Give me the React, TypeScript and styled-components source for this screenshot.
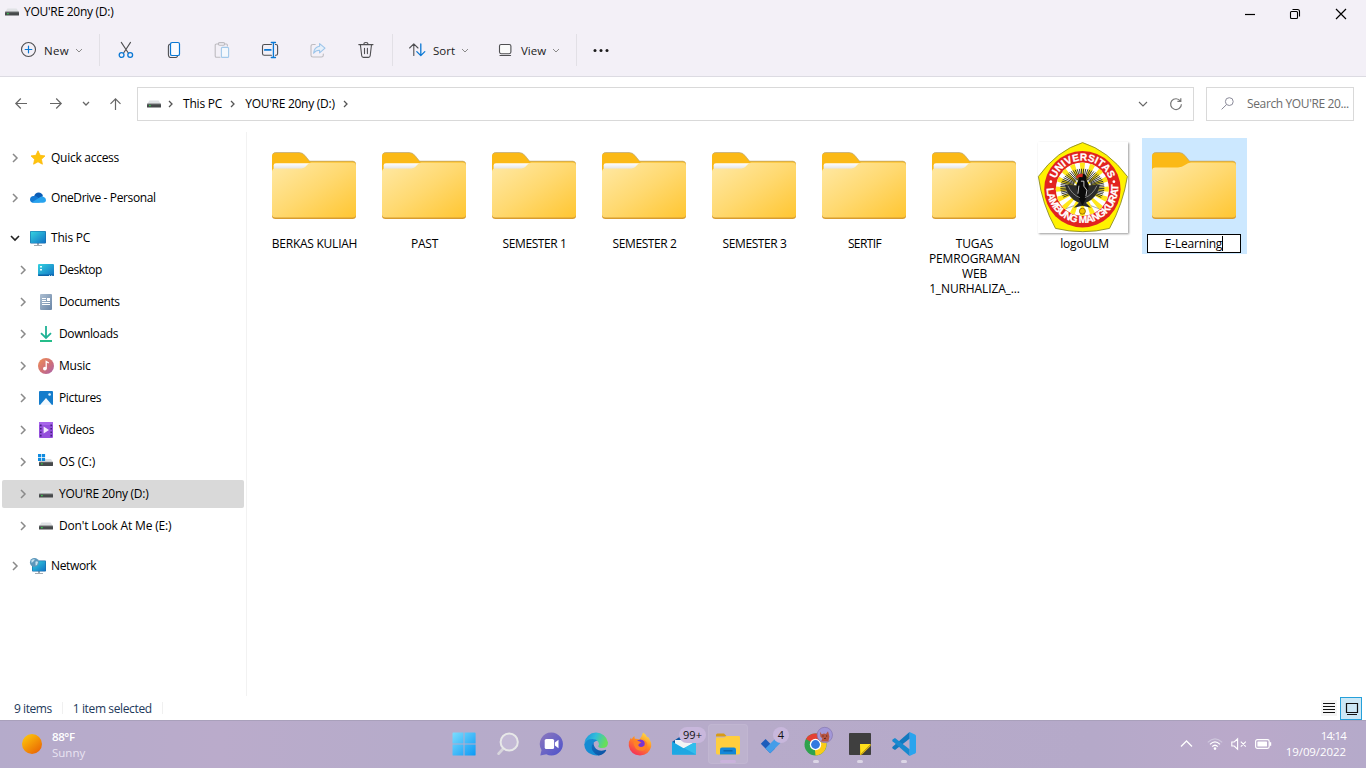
import React from 'react';
import styled, { createGlobalStyle, css } from 'styled-components';

const GlobalStyle = createGlobalStyle`
  * { box-sizing: border-box; }
  html, body { margin: 0; padding: 0; overflow: hidden; }
  body { font-family: "Open Sans", "Noto Sans", sans-serif; font-size: 12px; color: #000; background: #fff; }
  svg { display: block; flex: none; overflow: visible; }
`;

const Desktop = styled.div`
  width: 1366px;
  height: 768px;
  display: flex;
  flex-direction: column;
  background: #fff;
`;

const Label = styled.span<{ $track?: number }>`
  white-space: nowrap;
  line-height: 16px;
  letter-spacing: ${p => p.$track ?? -0.27}px;
`;

/* ---------- title bar ---------- */

const TitleBar = styled.header`
  height: 28px;
  display: flex;
  align-items: flex-start;
  background: #f3f0f7;
  padding-left: 4px;
`;

const WindowTitle = styled.div`
  display: flex;
  align-items: center;
  gap: 4px;
  height: 24px;
  flex: 1;
`;

const CaptionButton = styled.div<{ $width: number }>`
  width: ${p => p.$width}px;
  height: 28px;
  display: flex;
  align-items: center;
  justify-content: center;
`;

/* ---------- command bar ---------- */

const CommandBar = styled.div`
  height: 49px;
  display: flex;
  align-items: flex-start;
  padding-left: 8px;
  background: #f3f0f7;
  border-bottom: 1px solid #dcdbe2;
`;

const Command = styled.div<{ $width: number; $pad: number }>`
  width: ${p => p.$width}px;
  padding-left: ${p => p.$pad}px;
  height: 44px;
  display: flex;
  align-items: center;
`;

const CommandText = styled(Label)`
  font-size: 11.5px;
  color: #1b1b1b;
  margin: 2px 7px 0 8px;
`;

const IconGroup = styled.div`
  display: flex;
  padding: 0 2px;
`;

const IconCommand = styled.div`
  width: 48px;
  height: 44px;
  display: flex;
  align-items: center;
  justify-content: center;
`;

const Divider = styled.div`
  width: 1px;
  height: 32px;
  margin-top: 6px;
  background: #e2e0e6;
`;

/* ---------- address row ---------- */

const AddressRow = styled.div`
  height: 55px;
  padding: 10px 12px 0 0;
  display: flex;
  align-items: flex-start;
`;

const NavButtons = styled.div`
  width: 137px;
  height: 34px;
  display: grid;
  grid-template-columns: 41px 30px 30px 29px;
  align-items: center;
  justify-items: center;
`;

const AddressBox = styled.div`
  width: 1057px;
  height: 34px;
  border: 1px solid #d9d9d9;
  display: flex;
  align-items: center;
`;

const SearchBox = styled.div`
  width: 148px;
  height: 34px;
  margin-left: 12px;
  padding-left: 14px;
  border: 1px solid #d9d9d9;
  display: flex;
  align-items: center;
`;

const Crumbs = styled.div`
  display: flex;
  align-items: center;
  flex: 1;
  gap: 9px;
  padding-left: 8px;
`;

const DriveCrumb = styled.div`
  margin-right: -2px;
`;

const Crumb = styled(Label)`
  margin-left: 2px;
`;

const BoxIcon = styled.div<{ $right: number }>`
  margin-right: ${p => p.$right}px;
`;

const SearchText = styled(Label)`
  color: #6b6b6b;
  margin-left: 13px;
`;

/* ---------- body ---------- */

const Body = styled.div`
  height: 565px;
  display: flex;
`;

const Sidebar = styled.nav`
  width: 247px;
  height: 564px;
  border-right: 1px solid #f2f2f2;
  padding: 12px 2px 0 2px;
  display: flex;
  flex-direction: column;
  gap: 4px;
`;

const TreeRow = styled.div<{ $nested?: boolean; $spaced?: boolean; $selected?: boolean }>`
  width: 242px;
  height: 28px;
  border-radius: 2px;
  display: flex;
  align-items: center;
  padding-left: ${p => (p.$nested ? 16 : 8)}px;
  margin-top: ${p => (p.$spaced ? 8 : 0)}px;
  ${p => p.$selected && css`background: #d9d9d9;`}
`;

const Twist = styled.div`
  width: 9px;
  margin-right: 11px;
  padding-top: 1px;
  display: flex;
  justify-content: center;
`;

const TreeIcon = styled.div`
  width: 16px;
  height: 16px;
  margin-right: 5px;
`;

const Files = styled.main`
  flex: 1;
  padding: 6px 0 0 15px;
  display: flex;
  align-items: flex-start;
  gap: 5px;
`;

const FileCell = styled.div<{ $selected?: boolean }>`
  width: 105px;
  height: ${p => (p.$selected ? '116px' : 'auto')};
  background: ${p => (p.$selected ? '#cce8ff' : 'transparent')};
  display: flex;
  flex-direction: column;
  align-items: center;
`;

const Thumb = styled.div`
  width: 105px;
  height: 96px;
  padding-right: 1px;
  display: flex;
  align-items: flex-start;
  justify-content: center;
`;

const FileName = styled.div<{ $track?: number }>`
  margin-top: 2px;
  line-height: 15px;
  text-align: center;
  white-space: pre-line;
  letter-spacing: ${p => p.$track ?? -0.2}px;
`;

const RenameBox = styled.div`
  width: 94px;
  height: 19px;
  margin-right: 1px;
  padding-top: 1px;
  border: 1px solid #000;
  background: #fff;
  display: flex;
  align-items: center;
  justify-content: center;
`;

const Caret = styled.span`
  width: 1px;
  height: 15px;
  background: #000;
`;

const Picture = styled.div`
  width: 90px;
  height: 91px;
  margin: 4px 3px 0 0;
  background: #fff;
  box-shadow: 1px 1px 2px rgba(0, 0, 0, 0.4);
`;

/* ---------- status bar ---------- */

const StatusBar = styled.footer`
  height: 24px;
  display: flex;
  align-items: center;
  padding-left: 14px;
  color: #1e395b;
`;

const StatusText = styled(Label)`
  margin-top: 2px;
`;

const StatusDivider = styled.div`
  width: 1px;
  height: 12px;
  margin: 0 10px;
  background: #f0f0f0;
`;

const ViewSwitch = styled.div`
  margin-left: auto;
  padding-right: 4px;
  display: flex;
  align-items: center;
  gap: 3px;
`;

const ViewMode = styled.div<{ $active?: boolean }>`
  width: ${p => (p.$active ? 22 : 16)}px;
  height: ${p => (p.$active ? 23 : 16)}px;
  padding: ${p => (p.$active ? '1px 0 0 2px' : '0')};
  background: ${p => (p.$active ? '#cce8f6' : '#f5f5f5')};
  border: ${p => (p.$active ? '1px solid #26a0da' : '0')};
  display: flex;
  align-items: center;
  justify-content: center;
`;

/* ---------- taskbar ---------- */

const Taskbar = styled.div`
  height: 48px;
  display: flex;
  border-top: 1px solid #a9a0bb;
  background: linear-gradient(90deg, #b5abcb 0%, #baabcb 16%, #b6abca 30%, #b7abca 55%, #b5a9c9 80%, #baa9ca 91%, #b5aaca 100%);
`;

const Weather = styled.div`
  width: 442px;
  padding: 0 0 1px 22px;
  display: flex;
  align-items: center;
  gap: 10px;
`;

const WeatherText = styled.div`
  display: flex;
  flex-direction: column;
  padding-top: 1px;
  font-size: 11.5px;
  color: #fff;
`;

const Temperature = styled(Label)`
  font-weight: 600;
`;

const WeatherNote = styled(Label)`
  color: #e9e4f2;
`;

const Apps = styled.div`
  display: flex;
  align-items: flex-start;
`;

const AppSlot = styled.div<{ $active?: boolean }>`
  position: relative;
  width: 44px;
  height: 46px;
  display: flex;
  align-items: center;
  justify-content: center;
  &::before {
    content: "";
    position: absolute;
    inset: 3px 2px;
    border-radius: 4px;
    background: ${p => (p.$active ? 'rgba(255,255,255,0.09)' : 'transparent')};
    border: ${p => (p.$active ? '1px solid rgba(255,255,255,0.06)' : '0')};
  }
  svg { position: relative; }
`;

const Running = styled.span<{ $wide?: boolean }>`
  position: absolute;
  bottom: 4px;
  left: 50%;
  width: ${p => (p.$wide ? 16 : 6)}px;
  margin-left: ${p => (p.$wide ? -8 : -3)}px;
  height: 3px;
  border-radius: 2px;
  background: ${p => (p.$wide ? '#cab3dc' : '#dcd6e6')};
`;

const Badge = styled.span<{ $width: number; $left: number }>`
  position: absolute;
  top: 6px;
  left: ${p => p.$left}px;
  width: ${p => p.$width}px;
  height: 16px;
  border-radius: 8px;
  background: #c8b7dc;
  color: #111;
  font-size: 11px;
  line-height: 16px;
  text-align: center;
`;

const Tray = styled.div`
  margin-left: auto;
  padding: 0 20px 1px 0;
  display: flex;
  align-items: center;
`;

const TrayIcons = styled.div`
  display: flex;
  align-items: center;
  gap: 8px;
  margin-right: 12px;
`;

const TrayChevron = styled.div`
  margin-right: 7px;
`;

const Clock = styled.div`
  width: 62px;
  display: flex;
  flex-direction: column;
  align-items: flex-end;
  color: #fff;
  font-size: 11.5px;
`;

/* ---------- icons ---------- */

const Drive = () => (
  <svg width="16" height="16" viewBox="0 0 16 16">
    <path d="M3.4 4.5h9.2l2.2 3.4H1.2z" fill="#e0e2e5" />
    <rect x="1" y="7.8" width="14" height="3.8" rx=".4" fill="#46494b" />
    <path d="M1.2 8.1h13.6" stroke="#7c7f81" strokeWidth=".7" />
    <path d="M3.2 9.6h1.4" stroke="#2fe04b" strokeWidth="1.2" />
  </svg>
);

type ChevronProps = { dir?: 'right' | 'down' | 'up'; w?: number; color?: string; stroke?: number };

const Chevron = ({ dir = 'right', w = 4, color = '#8a8a8a', stroke = 1.3 }: ChevronProps) =>
  dir === 'right' ? (
    <svg width={w} height={w * 2} viewBox={`0 0 ${w} ${w * 2}`} fill="none" stroke={color} strokeWidth={stroke}>
      <path d={`M0 0L${w} ${w}L0 ${w * 2}`} />
    </svg>
  ) : (
    <svg width={w * 2} height={w} viewBox={`0 0 ${w * 2} ${w}`} fill="none" stroke={color} strokeWidth={stroke}>
      <path d={dir === 'down' ? `M0 0L${w} ${w}L${w * 2} 0` : `M0 ${w}L${w} 0L${w * 2} ${w}`} />
    </svg>
  );

const Line = ({ children }: { children: React.ReactNode }) => (
  <svg width="16" height="16" viewBox="0 0 16 16" fill="none" stroke="#4f4f52" strokeWidth="1.1" strokeLinecap="round" strokeLinejoin="round">
    {children}
  </svg>
);

const BLUE = '#0a78d4';

const NewIcon = () => (
  <Line><circle cx="8.5" cy="7.5" r="7" /><path d="M8.5 4.2v6.6M5.2 7.5h6.6" stroke={BLUE} strokeWidth="1.2" /></Line>
);
const CutIcon = () => (
  <Line>
    <path d="M3.3 .4L10.3 11M12.5 .4L5.6 11" />
    <circle cx="3.6" cy="13" r="2.4" stroke={BLUE} strokeWidth="1.3" />
    <circle cx="12.2" cy="13" r="2.4" stroke={BLUE} strokeWidth="1.3" />
  </Line>
);
const CopyIcon = () => (
  <Line>
    <path d="M3.6 2.2Q2.4 2.8 2.4 4.4V12.4Q2.4 15.5 5.4 15.5H9.4Q10.8 15.5 11.4 14.4" />
    <rect x="4.5" y=".5" width="9" height="13" rx="1.6" fill="#f9fbff" stroke={BLUE} strokeWidth="1.2" />
  </Line>
);
const PasteIcon = () => (
  <Line>
    <path d="M4.5 2H2.4Q1.2 2 1.2 3.2V14Q1.2 15.3 2.4 15.3H6M10.5 2H12.4Q13.4 2 13.4 3.2V4" stroke="#bdbbc0" />
    <rect x="4.4" y=".6" width="6.2" height="2.6" rx="1.2" stroke="#bdbbc0" />
    <rect x="7.4" y="5.4" width="7.2" height="10" rx="1" fill="#f4f8fd" stroke="#a3c9ea" />
  </Line>
);
const RenameIcon = () => (
  <Line>
    <path d="M9.4 2.5H2.3Q.5 2.5 .5 4.3V11.4Q.5 13.2 2.3 13.2H9.4M13.4 2.5H14Q15.6 2.5 15.6 4.3V11.4Q15.6 13.2 14 13.2H13.4" />
    <path d="M2.8 7.9h6" stroke={BLUE} strokeWidth="1.7" />
    <path d="M11.4 .5v15M9.3 .5h4.2M9.3 15.5h4.2" stroke={BLUE} strokeWidth="1.3" />
  </Line>
);
const ShareIcon = () => (
  <Line>
    <path d="M5.2 2.5H3Q1 2.5 1 4.4V13.2Q1 15 3 15H11.4Q13.3 15 13.3 13.2V12" stroke="#bdbbc0" />
    <path d="M9.6 1.6L15 6.2L9.6 10.8V8.2Q5.8 8 3.6 11.2Q4.2 5 9.6 4.3Z" fill="#e7f0fa" stroke="#9cc5ea" />
  </Line>
);
const TrashIcon = () => (
  <Line>
    <path d="M.8 2.6H15M2.4 2.8L3.7 13.8Q3.9 15.4 5.4 15.4H10.5Q12 15.4 12.2 13.8L13.5 2.8M5.8 2.4Q5.8 .5 7.9 .5T10 2.4M6.5 6.2V11.6M9.4 6.2V11.6" />
  </Line>
);
const SortIcon = () => (
  <Line>
    <path d="M4.8 13.4V2M.6 6L4.8 1.8L9 6" />
    <path d="M11.8 2V13.4M7.8 9.6L11.8 13.6L15.8 9.6" stroke={BLUE} strokeWidth="1.3" />
  </Line>
);
const ViewIcon = () => (
  <Line>
    <rect x="2.5" y="2.5" width="11.4" height="9.2" rx="1.6" fill="#fafafa" />
    <path d="M3 13.5h10.6" />
  </Line>
);

const Stroke = ({ w, h, d, color = '#666' }: { w: number; h: number; d: string; color?: string }) => (
  <svg width={w} height={h} viewBox={`0 0 ${w} ${h}`} fill="none" stroke={color} strokeWidth="1.2">
    <path d={d} />
  </svg>
);

const treeIcons: Record<string, React.ReactNode> = {
  star: (
    <svg width="16" height="16" viewBox="0 0 16 16">
      <path d="M8 .8L10.1 5.3L15 5.9L11.4 9.3L12.4 14.2L8 11.8L3.6 14.2L4.6 9.3L1 5.9L5.9 5.3Z" fill="#fec40c" stroke="#fdb90b" strokeWidth=".8" strokeLinejoin="round" />
    </svg>
  ),
  cloud: (
    <svg width="16" height="16" viewBox="0 0 16 16">
      <path d="M4 6.5Q5.2 2.6 8.6 2.6Q12 2.6 13 6.2L8 9Z" fill="#0a5cb5" />
      <path d="M3.4 12.6Q0 12.4 0 9.4Q.2 6.2 3.6 6Q5.6 5.6 7.4 7L13 11L9 12.6Z" fill="#1479d3" />
      <path d="M2 12.3L9.6 7.4Q11.4 6 13.3 6.8Q16 7.6 16 10Q15.9 12.8 13 12.8H3.6Q2.6 12.8 2 12.3Z" fill="#27a3ee" />
    </svg>
  ),
  pc: (
    <svg width="16" height="16" viewBox="0 0 16 16">
      <defs><linearGradient id="scr" x1="0" y1="0" x2="1" y2="1"><stop offset="0" stopColor="#34d3e0" /><stop offset="1" stopColor="#1071c4" /></linearGradient></defs>
      <path d="M7 13h2v2h3v.9H4V15h3z" fill="#a3abb2" />
      <rect x="0" y="1" width="16" height="12.6" rx="1" fill="#1a6ba8" />
      <rect x=".6" y="1.6" width="14.8" height="11.4" rx=".5" fill="url(#scr)" />
    </svg>
  ),
  desktop: (
    <svg width="16" height="16" viewBox="0 0 16 16">
      <rect x="0" y="2" width="16" height="12" rx="1" fill="url(#scr)" />
      <path d="M0 12.6h16V13q0 1-1 1H1q-1 0-1-1z" fill="#0d63a8" />
      <path d="M2 4h2v1.6H2zM2 7h2v1.6H2zM11 13h1v.8h-1zM13.2 13h1v.8h-1z" fill="#e8fbff" />
    </svg>
  ),
  docs: (
    <svg width="16" height="16" viewBox="0 0 16 16">
      <defs><linearGradient id="doc" x1="0" y1="0" x2="1" y2="1"><stop offset="0" stopColor="#adbfd2" /><stop offset="1" stopColor="#6985a6" /></linearGradient></defs>
      <rect x="2" y="0" width="12" height="16" rx="1" fill="url(#doc)" />
      <path d="M4 4.5h4M4 6.5h4M4 8.5h8M4 10.5h8" stroke="#fff" strokeWidth="1" />
      <rect x="9" y="4" width="3" height="3" fill="#fff" />
    </svg>
  ),
  down: (
    <svg width="16" height="16" viewBox="0 0 16 16" fill="none" stroke="#1fb295" strokeWidth="1.8">
      <path d="M8 0V12M3 7.2L8 12L13 7.2" /><path d="M2 15h12" stroke="#25bd8a" strokeWidth="2" />
    </svg>
  ),
  music: (
    <svg width="16" height="16" viewBox="0 0 16 16">
      <defs><linearGradient id="mus" x1="0" y1="0" x2="1" y2="1"><stop offset="0" stopColor="#f09055" /><stop offset=".55" stopColor="#cf6f78" /><stop offset="1" stopColor="#a862ad" /></linearGradient></defs>
      <circle cx="8" cy="8" r="8" fill="url(#mus)" />
      <circle cx="6.9" cy="10.6" r="1.9" fill="#fff" /><path d="M8.2 10.6V3.4L10.8 5" fill="none" stroke="#fff" strokeWidth="1.3" />
    </svg>
  ),
  pictures: (
    <svg width="16" height="16" viewBox="0 0 16 16">
      <rect x="1" y="1" width="14" height="14" rx="1" fill="#147ccb" />
      <path d="M2 15L8 8L14 15Z" fill="#f3f9fe" /><circle cx="11.6" cy="4.5" r="1.3" fill="#d9efff" />
    </svg>
  ),
  videos: (
    <svg width="16" height="16" viewBox="0 0 16 16">
      <rect x="1" y="0" width="14" height="16" rx="1" fill="#9550dc" />
      <path d="M1 0h14v3H1z" fill="#a765ea" />
      <path d="M2.8 2.6v12M13.2 2.6v12" stroke="#41207c" strokeWidth="1.5" strokeDasharray="1.6 1.8" />
      <path d="M5.6 4.6L11 8L5.6 11.4Z" fill="#f5ecff" />
    </svg>
  ),
  os: (
    <svg width="16" height="16" viewBox="0 0 16 16">
      <path d="M5 5h8l1.9 3H1z" fill="#dcdfe2" />
      <rect x="1" y="7.9" width="14" height="4" rx=".4" fill="#46494b" /><path d="M1.2 8.2h13.6" stroke="#7c7f81" strokeWidth=".7" /><path d="M3.2 9.8h1.4" stroke="#2fe04b" strokeWidth="1.2" />
      <path d="M0 0h3.2v3.2H0zM3.9 0h3.2v3.2H3.9zM0 3.9h3.2v3.2H0zM3.9 3.9h3.2v3.2H3.9z" fill="#0f8be0" />
    </svg>
  ),
  drive: <Drive />,
  network: (
    <svg width="16" height="16" viewBox="0 0 16 16">
      <path d="M8 13h2v2h3v.9H5V15h3z" fill="#a3abb2" />
      <rect x="2" y="2.6" width="14" height="11" rx=".8" fill="#1a6ba8" /><rect x="2.6" y="3.2" width="12.8" height="9.8" fill="url(#scr)" />
      <circle cx="4.4" cy="4.4" r="4.5" fill="#5c97bb" /><path d="M1.3 2.4Q3 .6 5 1.4L3.4 3.6L1.6 5zM5.4 3.8Q7.4 2.4 8 4.2Q7.6 7 5.6 7.6Z" fill="#c4e0ee" />
    </svg>
  ),
};

const FRONT_FULL = 'M0 34Q0 30.6 3.4 30.6H27Q32 30.6 34.6 27.4Q36.6 24.4 39.4 24.4H80.5Q84 24.4 84 27.8V76.6Q84 79.6 80.5 79.6H3.5Q0 79.6 0 76.6Z';
const FRONT_EMPTY = 'M0 32.6Q0 29.4 3.4 29.4H26Q30 29.4 33 27Q36 24.4 39 24.4H80.5Q84 24.4 84 27.8V76.6Q84 79.6 80.5 79.6H3.5Q0 79.6 0 76.6Z';

const Folder = ({ filled }: { filled?: boolean }) => (
  <svg width="84" height="82" viewBox="0 0 84 82">
    <defs>
      <linearGradient id="front" x1="0" y1="0" x2="1" y2="1">
        <stop offset="0" stopColor="#ffe9a6" /><stop offset=".5" stopColor="#ffd970" /><stop offset="1" stopColor="#ffc632" />
      </linearGradient>
      <linearGradient id="sheet" x1="0" y1="0" x2="0" y2="1"><stop offset="0" stopColor="#fff" /><stop offset="1" stopColor="#dedede" /></linearGradient>
    </defs>
    <path d="M0 18Q0 14.5 3.5 14.5H27Q30.5 14.5 33 17.5L37.5 23H80.5Q84 23 84 27V50H0Z" fill="#fbb916" />
    <path d="M1 16Q2 14.5 3.5 14.5H27Q30.5 14.5 33 17.5L37.5 23.2H81Q83 23.4 83.6 25.5" fill="none" stroke="#b9a77c" strokeWidth=".9" opacity=".8" />
    {filled && <path d="M1.6 32V27.6Q1.6 25.2 4 25.2H38Q35 30 29 32Z" fill="url(#sheet)" />}
    <path d="M0 70H84V78Q84 81 80.5 81H3.5Q0 81 0 78Z" fill="#d79c30" />
    <path d={filled ? FRONT_FULL : FRONT_EMPTY} fill="url(#front)" />
  </svg>
);

const rays = Array.from({ length: 16 }, (_, i) => i * 22.5);
const spokes = Array.from({ length: 44 }, (_, i) => -210 + i * 5.6);

const UniversityLogo = () => (
  <svg width="90" height="91" viewBox="0 0 90 91">
    <defs>
      <path id="arcTop" d="M15.8 45.5A28.7 28.7 0 0 1 73.2 45.5" />
      <path id="arcBottom" d="M8.7 43.5A35.8 35.8 0 1 0 80.3 43.5" />
    </defs>
    <path d="M44.6 .6Q70 8.5 89.4 34.5Q85 62 71.5 86.4Q45 93 17.5 86.4Q4 62 .4 34.5Q19 8.5 44.6 .6Z" fill="#fff200" stroke="#8c8a28" strokeWidth=".9" />
    <g transform="translate(-.1 1.7)">
      <circle cx="44.5" cy="45.5" r="38.2" fill="#e2231f" />
      <circle cx="44.5" cy="45.5" r="26.6" fill="#fff" />
      {rays.map(a => (
        <path key={a} d="M44.5 45.5L41.9 19.2Q44.5 18.4 47.1 19.2Z" fill="#ffe719" transform={`rotate(${a} 44.5 45.5)`} />
      ))}
      {spokes.map(a => {
        const r = (a * Math.PI) / 180;
        return <line key={a} x1={44.5 + 9 * Math.cos(r)} y1={44 + 9 * Math.sin(r)} x2={44.5 + 22 * Math.cos(r)} y2={44 + 19 * Math.sin(r)} stroke="#252525" strokeWidth=".9" />;
      })}
      <path d="M44.5 42L27 41Q30 55 41 59L36 64L44.5 62L53 64L48 59Q59 55 62 41Z" fill="#2b2b2b" />
      <path d="M40.5 36Q40.5 30 45 30Q49 30.5 48.6 36L51 41L49 53L44.5 62L40 53L38.5 41Z" fill="#0b0b0b" />
      <path d="M45 30Q38 29.4 38.4 35Q41 32.6 44.6 33.6Z" fill="#d82a1e" />
      <path d="M43 37.5h3v5l3 4-1 6M41 42l-1 8" fill="none" stroke="#eee" strokeWidth=".8" />
      <path d="M30 42Q34 51 42 54M59 42Q55 51 47 54M36 62L28 65M53 62L61 65" fill="none" stroke="#999" strokeWidth=".8" />
      <circle cx="44.5" cy="67.5" r="3" fill="#f4c300" stroke="#8c6800" strokeWidth=".9" />
      <circle cx="12.9" cy="38" r="1.4" fill="#fff" /><circle cx="76" cy="38" r="1.4" fill="#fff" />
      <g fill="#fff" stroke="#fff" strokeWidth=".25" fontFamily="Liberation Sans, sans-serif" fontWeight="700" fontSize="10.2">
        <text><textPath href="#arcTop" startOffset="10.5" textLength="69">UNIVERSITAS</textPath></text>
        <text><textPath href="#arcBottom" startOffset="1" textLength="114">LAMBUNG MANGKURAT</textPath></text>
      </g>
    </g>
  </svg>
);

const appIcons = {
  start: (
    <svg width="24" height="24" viewBox="0 0 24 24">
      <defs><linearGradient id="win" x1="0" y1="0" x2="1" y2="1"><stop offset="0" stopColor="#7bdcfd" /><stop offset="1" stopColor="#0b99f5" /></linearGradient></defs>
      <path d="M.5 1.5Q.5 .6 1.4 .6H11.5V11.6H.5zM12.5.6H22.6q1 0 1 .9V11.6H12.5zM.5 12.6h11v11H1.4q-.9 0-.9-.9zM12.5 12.6H23.6v10.1q0 .9-1 .9H12.5z" fill="url(#win)" />
    </svg>
  ),
  search: (
    <svg width="24" height="24" viewBox="0 0 24 24" fill="none">
      <path d="M2.6 21.6L7.6 16.2" stroke="#d7d5dc" strokeWidth="2.8" strokeLinecap="round" />
      <circle cx="13.2" cy="10" r="8.6" fill="#c4bad6" stroke="#e7e8e8" strokeWidth="2" />
    </svg>
  ),
  chat: (
    <svg width="24" height="24" viewBox="0 0 24 24">
      <defs><linearGradient id="chat" x1="0" y1="0" x2="1" y2="1"><stop offset="0" stopColor="#8d79bd" /><stop offset="1" stopColor="#4c51cc" /></linearGradient></defs>
      <path d="M11.5 .5A11.5 11.5 0 1 1 6.3 22.3L.3 23.4L1.5 18A11.5 11.5 0 0 1 11.5 .5Z" fill="url(#chat)" />
      <rect x="4.7" y="7" width="9.4" height="10" rx="1.6" fill="#fff" /><path d="M14.9 10.4L18.5 7.8V16.2L14.9 13.6Z" fill="#fff" />
    </svg>
  ),
  edge: (
    <svg width="24" height="24" viewBox="0 0 24 24">
      <defs>
        <linearGradient id="edgeTop" x1="0" y1="0" x2="1" y2=".3"><stop offset="0" stopColor="#1b8fd8" /><stop offset=".5" stopColor="#31bddc" /><stop offset="1" stopColor="#67de5a" /></linearGradient>
        <linearGradient id="edgeLow" x1="0" y1="0" x2="1" y2="1"><stop offset="0" stopColor="#1270c0" /><stop offset="1" stopColor="#0c4ea0" /></linearGradient>
      </defs>
      <path d="M.3 11A12 12 0 0 1 24 10.4Q24 16 18 16Q14.4 16 14.2 14.2Q15.6 12.4 14.6 10.4Q13 7.4 8.8 7.4Q3.4 7.4 .3 11Z" fill="url(#edgeTop)" />
      <path d="M.2 12.2Q2 7 8.6 7Q11.6 7 13.4 8.6Q9 9.6 8.6 13.6Q8.6 19 14.6 20.6Q18.8 21 21.6 18.8A12 12 0 0 1 .2 12.2Z" fill="#158bd3" />
      <path d="M9.6 10.6Q6.4 14.6 8.6 18.8Q11 22.6 14.6 23.6Q19.4 22.6 22.2 18.4Q22 17.6 21 18Q16 20 12.2 17Q9.4 14.6 9.6 10.6Z" fill="url(#edgeLow)" />
    </svg>
  ),
  firefox: (
    <svg width="24" height="24" viewBox="0 0 24 24">
      <defs><linearGradient id="fx" x1=".8" y1="0" x2=".2" y2="1"><stop offset="0" stopColor="#ffe44a" /><stop offset=".45" stopColor="#ff8a22" /><stop offset="1" stopColor="#f5275f" /></linearGradient></defs>
      <path d="M15 .4Q18 2 19 5Q21 5 21.6 7.4Q24 11 23.2 14.6Q21 23.4 12 23.5Q2.6 23 .8 14Q.2 9.6 3 5.6L3.6 7.4Q5 4.6 6.4 4L6.8 6.8Q9.4 6.4 11.4 7.6Q13.6 5 15 .4Z" fill="url(#fx)" />
      <circle cx="12.4" cy="13" r="5.4" fill="#7a35d2" />
      <path d="M5.4 10Q9.6 7.4 13.4 10.8Q10 11.6 10.4 13.8Q13 16.6 16.4 13.4Q17.6 9.6 14.4 7.2Q20 9 19.2 14.4Q17 19.4 11.6 18.8Q6 17.4 5.4 10Z" fill="#ff8126" />
    </svg>
  ),
  mail: (
    <svg width="24" height="24" viewBox="0 0 24 24">
      <path d="M0 10L12 2L24 10V14H0Z" fill="#0c59a4" /><path d="M3 8h18v9H3z" fill="#f2f4f5" />
      <path d="M0 9.6L12 16.4L24 9.6V22.4H0Z" fill="#1ba8e4" /><path d="M0 22.4L24 9.6V22.4Z" fill="#32bdec" /><path d="M0 22.4L12 16L24 22.4Z" fill="#1498dc" opacity=".6" />
    </svg>
  ),
  explorer: (
    <svg width="24" height="24" viewBox="0 0 24 24">
      <path d="M0 3Q0 1.4 1.5 1.4H8L11 4.4H0z" fill="#d89b14" /><path d="M0 5.4H8L10.6 4H22.6Q24 4 24 5.4V21Q24 22.4 22.6 22.4H1.4Q0 22.4 0 21Z" fill="#ffce3e" />
      <path d="M4 22.4V17.4Q4 15.4 6 15.4H18Q20 15.4 20 17.4V22.4Z" fill="#1387d8" /><path d="M7.5 18.8h9" stroke="#0b62a8" strokeWidth="1.4" />
    </svg>
  ),
  todo: (
    <svg width="24" height="24" viewBox="0 0 24 24">
      <path d="M.8 11.8L5.6 7L15 16.4L10.2 21.2Z" fill="#1e5dbb" /><path d="M5.4 16.4L16.6 5.2L21.4 10L10.2 21.2Z" fill="#459de8" />
    </svg>
  ),
  chrome: (
    <svg width="24" height="24" viewBox="0 0 24 24">
      <circle cx="11.5" cy="12.5" r="11" fill="#2ea24d" />
      <path d="M11.5 12.5L1.9 7A11 11 0 0 1 21 7Z" fill="#e44134" /><path d="M11.5 12.5L21 7A11 11 0 0 1 11.5 23.5L11 18Z" fill="#fbcc17" />
      <circle cx="11.5" cy="12.5" r="5.7" fill="#fff" /><circle cx="11.5" cy="12.5" r="4.4" fill="#3478e0" />
      <circle cx="20.8" cy="3" r="7.7" fill="#a398d8" stroke="#8070ab" strokeWidth=".6" />
      <path d="M16 -.2L17.6 2.2L20 1.4L22 2L24 -.8L25.4 4.6L24.4 9.6H17L18.4 6.6L16.4 4.6Z" fill="#b65441" /><path d="M18.4 4h1.2M22 4h1.2M20 6.6l2-.4" stroke="#57251e" strokeWidth="1" />
    </svg>
  ),
  notes: (
    <svg width="24" height="24" viewBox="0 0 24 24">
      <rect x="1" y="1" width="22" height="22" rx=".8" fill="#3f3f3f" /><path d="M12 12H23L12 23Z" fill="#ffe01b" /><path d="M12 23V12.6L13 22L22.6 12.4V14L14 22.6Z" fill="#e9bc0d" />
    </svg>
  ),
  code: (
    <svg width="24" height="24" viewBox="0 0 24 24">
      <path d="M17.5 0L23 2.4Q24 3 24 4V20Q24 21 23 21.6L17.5 24Z" fill="#2aa4ee" />
      <path d="M17.5 0V6.8L3 18L.6 16.4Q-.2 15.6.6 14.8Z" fill="#1279bf" /><path d="M17.5 24V17.2L3 6L.6 7.6Q-.2 8.4.6 9.2Z" fill="#1889cf" />
    </svg>
  ),
};

/* ---------- data ---------- */

type TreeNode = { name: string; icon: string; nested?: boolean; spaced?: boolean; selected?: boolean; open?: boolean; track?: number };

const tree: TreeNode[] = [
  { name: 'Quick access', icon: 'star' },
  { name: 'OneDrive - Personal', icon: 'cloud', spaced: true, track: -0.37 },
  { name: 'This PC', icon: 'pc', spaced: true, open: true, track: -0.2 },
  { name: 'Desktop', icon: 'desktop', nested: true, track: -0.5 },
  { name: 'Documents', icon: 'docs', nested: true, track: -0.4 },
  { name: 'Downloads', icon: 'down', nested: true, track: -0.4 },
  { name: 'Music', icon: 'music', nested: true, track: -0.2 },
  { name: 'Pictures', icon: 'pictures', nested: true, track: -0.35 },
  { name: 'Videos', icon: 'videos', nested: true, track: -0.35 },
  { name: 'OS (C:)', icon: 'os', nested: true, track: -0.1 },
  { name: "YOU'RE 20ny (D:)", icon: 'drive', nested: true, selected: true },
  { name: "Don't Look At Me (E:)", icon: 'drive', nested: true, track: -0.17 },
  { name: 'Network', icon: 'network', spaced: true, track: -0.35 },
];

const folders = [
  { name: 'BERKAS KULIAH', track: -0.25 },
  { name: 'PAST', track: -0.2 },
  { name: 'SEMESTER 1', track: -0.42 },
  { name: 'SEMESTER 2', track: -0.42 },
  { name: 'SEMESTER 3', track: -0.42 },
  { name: 'SERTIF', track: -0.6 },
  { name: 'TUGAS\nPEMROGRAMAN\nWEB\n1_NURHALIZA_...', track: -0.12 },
];

export default function App() {
  return (
    <Desktop>
      <GlobalStyle />
      <TitleBar>
        <WindowTitle><Drive /><Label>YOU'RE 20ny (D:)</Label></WindowTitle>
        <CaptionButton $width={46}><Stroke w={10} h={10} d="M0 5.5H10" color="#000" /></CaptionButton>
        <CaptionButton $width={44}>
          <svg width="10" height="10" viewBox="0 0 10 10" fill="none" stroke="#000" strokeWidth="1.1"><rect x=".5" y="2.5" width="7" height="7" rx="1" /><path d="M2.5 .5H7.5Q9.5 .5 9.5 2.5V7.5" /></svg>
        </CaptionButton>
        <CaptionButton $width={48}><Stroke w={10} h={10} d="M0 0L10 10M10 0L0 10" color="#000" /></CaptionButton>
        <CaptionButton $width={1} />
      </TitleBar>

      <CommandBar>
        <Command $width={91} $pad={12}><NewIcon /><CommandText $track={0.3}>New</CommandText><Chevron dir="down" w={3} stroke={1} /></Command>
        <Divider />
        <IconGroup>
          <IconCommand><CutIcon /></IconCommand>
          <IconCommand><CopyIcon /></IconCommand>
          <IconCommand><PasteIcon /></IconCommand>
          <IconCommand><RenameIcon /></IconCommand>
          <IconCommand><ShareIcon /></IconCommand>
          <IconCommand><TrashIcon /></IconCommand>
        </IconGroup>
        <Divider />
        <Command $width={88} $pad={16}><SortIcon /><CommandText $track={0}>Sort</CommandText><Chevron dir="down" w={3} stroke={1} /></Command>
        <Command $width={95} $pad={16}><ViewIcon /><CommandText $track={0}>View</CommandText><Chevron dir="down" w={3} stroke={1} /></Command>
        <Divider />
        <IconCommand>
          <svg width="16" height="4" viewBox="0 0 16 4" fill="#1b1b1b"><circle cx="2" cy="2.5" r="1.5" /><circle cx="8" cy="2.5" r="1.5" /><circle cx="14" cy="2.5" r="1.5" /></svg>
        </IconCommand>
      </CommandBar>

      <AddressRow>
        <NavButtons>
          <Stroke w={12} h={11} d="M12 5.5H.8M5.8 .5L.8 5.5L5.8 10.5" />
          <Stroke w={12} h={11} d="M0 5.5H11.2M6.2 .5L11.2 5.5L6.2 10.5" />
          <Chevron dir="down" w={3} color="#666" />
          <Stroke w={11} h={12} d="M5.5 12V.8M.5 5.8L5.5 .8L10.5 5.8" />
        </NavButtons>
        <AddressBox>
          <Crumbs>
            <DriveCrumb><Drive /></DriveCrumb>
            <Chevron w={3} color="#555" />
            <Crumb $track={-0.2}>This PC</Crumb>
            <Chevron w={3} color="#555" />
            <Crumb>YOU'RE 20ny (D:)</Crumb>
            <Chevron w={3} color="#555" />
          </Crumbs>
          <BoxIcon $right={23}><Chevron dir="down" w={4} color="#666" stroke={1.1} /></BoxIcon>
          <BoxIcon $right={11}>
            <svg width="12" height="12" viewBox="0 0 12 12" fill="none" stroke="#777" strokeWidth="1.2"><path d="M10.4 3A5.4 5.4 0 1 0 11.4 6.2M10.8 .2V3.4H7.4" /></svg>
          </BoxIcon>
        </AddressBox>
        <SearchBox>
          <svg width="13" height="13" viewBox="0 0 13 13" fill="none" stroke="#8b8b9a" strokeWidth="1"><circle cx="8.3" cy="4.6" r="3.9" /><path d="M5.5 7.6L.6 12.4" /></svg>
          <SearchText $track={-0.37}>Search YOU'RE 20...</SearchText>
        </SearchBox>
      </AddressRow>

      <Body>
        <Sidebar>
          {tree.map(n => (
            <TreeRow key={n.name} $nested={n.nested} $spaced={n.spaced} $selected={n.selected}>
              <Twist>{n.open ? <Chevron dir="down" color="#222" stroke={1.6} /> : <Chevron stroke={1.5} />}</Twist>
              <TreeIcon>{treeIcons[n.icon]}</TreeIcon>
              <Label $track={n.track}>{n.name}</Label>
            </TreeRow>
          ))}
        </Sidebar>
        <Files>
          {folders.map(f => (
            <FileCell key={f.name}>
              <Thumb><Folder filled /></Thumb>
              <FileName $track={f.track}>{f.name}</FileName>
            </FileCell>
          ))}
          <FileCell>
            <Thumb><Picture><UniversityLogo /></Picture></Thumb>
            <FileName $track={-0.15}>logoULM</FileName>
          </FileCell>
          <FileCell $selected>
            <Thumb><Folder /></Thumb>
            <RenameBox><Label $track={-0.2}>E-Learning</Label><Caret /></RenameBox>
          </FileCell>
        </Files>
      </Body>

      <StatusBar>
        <StatusText $track={-0.45}>9 items</StatusText>
        <StatusDivider />
        <StatusText $track={-0.37}>1 item selected</StatusText>
        <StatusDivider />
        <ViewSwitch>
          <ViewMode><Stroke w={12} h={12} d="M0 1.5H12M0 4.5H12M0 7.5H12M0 10.5H12" color="#111" /></ViewMode>
          <ViewMode $active><Stroke w={12} h={12} d="M.5 .5H11.5V9.5H.5ZM1 11.5H11" color="#111" /></ViewMode>
        </ViewSwitch>
      </StatusBar>

      <Taskbar>
        <Weather>
          <svg width="20" height="20" viewBox="0 0 20 20">
            <defs><linearGradient id="sun" x1="0" y1="0" x2=".8" y2="1"><stop offset="0" stopColor="#ffd00d" /><stop offset="1" stopColor="#ea6403" /></linearGradient></defs>
            <circle cx="10" cy="10" r="10" fill="url(#sun)" />
          </svg>
          <WeatherText><Temperature $track={-0.4}>88°F</Temperature><WeatherNote $track={0}>Sunny</WeatherNote></WeatherText>
        </Weather>
        <Apps>
          <AppSlot>{appIcons.start}</AppSlot>
          <AppSlot>{appIcons.search}</AppSlot>
          <AppSlot>{appIcons.chat}</AppSlot>
          <AppSlot>{appIcons.edge}</AppSlot>
          <AppSlot>{appIcons.firefox}</AppSlot>
          <AppSlot>{appIcons.mail}<Badge $left={17} $width={27}>99+</Badge></AppSlot>
          <AppSlot $active>{appIcons.explorer}<Running $wide /></AppSlot>
          <AppSlot>{appIcons.todo}<Badge $left={23} $width={16}>4</Badge></AppSlot>
          <AppSlot>{appIcons.chrome}<Running /></AppSlot>
          <AppSlot>{appIcons.notes}<Running /></AppSlot>
          <AppSlot>{appIcons.code}<Running /></AppSlot>
        </Apps>
        <Tray>
          <TrayIcons>
            <TrayChevron><Chevron dir="up" w={5.5} color="#fff" stroke={1.3} /></TrayChevron>
            <svg width="16" height="12" viewBox="0 0 16 12" fill="none" stroke="#fff" strokeWidth="1.3">
              <path d="M.8 4.4Q8 -2.6 15.2 4.4" stroke="#cfc7dd" /><path d="M3 6.4Q8 1.4 13 6.4M5.2 8.6Q8 5.8 10.8 8.6" /><circle cx="8" cy="10.6" r="1.3" fill="#fff" stroke="none" />
            </svg>
            <svg width="16" height="12" viewBox="0 0 16 12" fill="none" stroke="#fff" strokeWidth="1.1"><path d="M.8 4H3.2L6.6 .8V11.2L3.2 8H.8ZM9.8 3.6L14.8 8.6M14.8 3.6L9.8 8.6" /></svg>
            <svg width="17" height="10" viewBox="0 0 17 10"><rect x=".6" y=".6" width="13.6" height="8.8" rx="1.8" fill="none" stroke="#fff" strokeWidth="1.2" /><rect x="2.4" y="2.4" width="9.6" height="5.2" rx=".6" fill="#fff" /><path d="M15.4 3.2v3.6" stroke="#fff" strokeWidth="1.6" /></svg>
          </TrayIcons>
          <Clock><Label $track={-0.8}>14:14</Label><Label $track={-0.08}>19/09/2022</Label></Clock>
        </Tray>
      </Taskbar>
    </Desktop>
  );
}
